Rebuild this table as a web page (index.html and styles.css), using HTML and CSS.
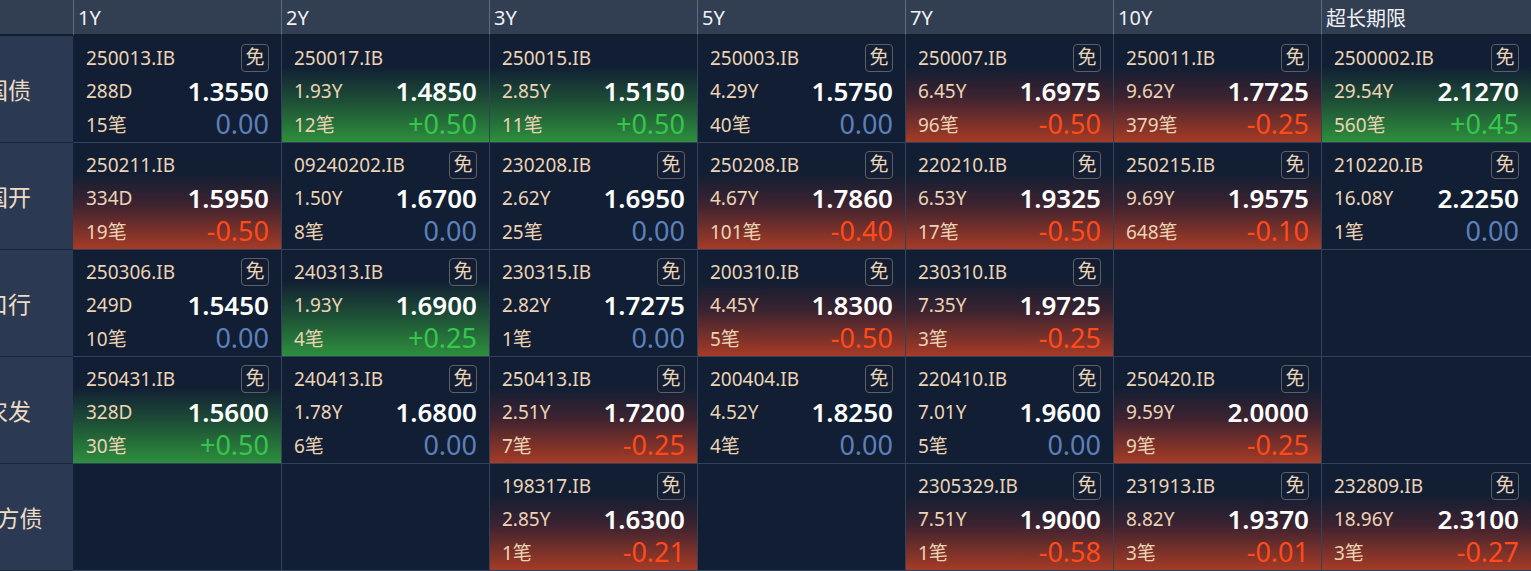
FILE: index.html
```html
<!DOCTYPE html>
<html lang="zh">
<head>
<meta charset="utf-8">
<title>债券行情</title>
<link rel="stylesheet" href="styles.css">
</head>
<body>
<div class="board">
  <div class="hd corner"></div>
  <div class="hd">1Y</div>
  <div class="hd">2Y</div>
  <div class="hd">3Y</div>
  <div class="hd">5Y</div>
  <div class="hd">7Y</div>
  <div class="hd">10Y</div>
  <div class="hd">超长期限</div>

  <!-- 国债 -->
  <div class="label"><span>国债</span></div>
  <div class="cell first">
    <div class="ln"><span class="code">250013.IB</span><span class="badge">免</span></div>
    <div class="ln"><span class="sub">288D</span><span class="price">1.3550</span></div>
    <div class="ln"><span class="sub">15笔</span><span class="chg flat">0.00</span></div>
  </div>
  <div class="cell green">
    <div class="ln"><span class="code">250017.IB</span></div>
    <div class="ln"><span class="sub">1.93Y</span><span class="price">1.4850</span></div>
    <div class="ln"><span class="sub">12笔</span><span class="chg up">+0.50</span></div>
  </div>
  <div class="cell green">
    <div class="ln"><span class="code">250015.IB</span></div>
    <div class="ln"><span class="sub">2.85Y</span><span class="price">1.5150</span></div>
    <div class="ln"><span class="sub">11笔</span><span class="chg up">+0.50</span></div>
  </div>
  <div class="cell">
    <div class="ln"><span class="code">250003.IB</span><span class="badge">免</span></div>
    <div class="ln"><span class="sub">4.29Y</span><span class="price">1.5750</span></div>
    <div class="ln"><span class="sub">40笔</span><span class="chg flat">0.00</span></div>
  </div>
  <div class="cell red">
    <div class="ln"><span class="code">250007.IB</span><span class="badge">免</span></div>
    <div class="ln"><span class="sub">6.45Y</span><span class="price">1.6975</span></div>
    <div class="ln"><span class="sub">96笔</span><span class="chg down">-0.50</span></div>
  </div>
  <div class="cell red">
    <div class="ln"><span class="code">250011.IB</span><span class="badge">免</span></div>
    <div class="ln"><span class="sub">9.62Y</span><span class="price">1.7725</span></div>
    <div class="ln"><span class="sub">379笔</span><span class="chg down">-0.25</span></div>
  </div>
  <div class="cell green">
    <div class="ln"><span class="code">2500002.IB</span><span class="badge">免</span></div>
    <div class="ln"><span class="sub">29.54Y</span><span class="price">2.1270</span></div>
    <div class="ln"><span class="sub">560笔</span><span class="chg up">+0.45</span></div>
  </div>

  <!-- 国开 -->
  <div class="label"><span>国开</span></div>
  <div class="cell first red">
    <div class="ln"><span class="code">250211.IB</span></div>
    <div class="ln"><span class="sub">334D</span><span class="price">1.5950</span></div>
    <div class="ln"><span class="sub">19笔</span><span class="chg down">-0.50</span></div>
  </div>
  <div class="cell">
    <div class="ln"><span class="code">09240202.IB</span><span class="badge">免</span></div>
    <div class="ln"><span class="sub">1.50Y</span><span class="price">1.6700</span></div>
    <div class="ln"><span class="sub">8笔</span><span class="chg flat">0.00</span></div>
  </div>
  <div class="cell">
    <div class="ln"><span class="code">230208.IB</span><span class="badge">免</span></div>
    <div class="ln"><span class="sub">2.62Y</span><span class="price">1.6950</span></div>
    <div class="ln"><span class="sub">25笔</span><span class="chg flat">0.00</span></div>
  </div>
  <div class="cell red">
    <div class="ln"><span class="code">250208.IB</span><span class="badge">免</span></div>
    <div class="ln"><span class="sub">4.67Y</span><span class="price">1.7860</span></div>
    <div class="ln"><span class="sub">101笔</span><span class="chg down">-0.40</span></div>
  </div>
  <div class="cell red">
    <div class="ln"><span class="code">220210.IB</span><span class="badge">免</span></div>
    <div class="ln"><span class="sub">6.53Y</span><span class="price">1.9325</span></div>
    <div class="ln"><span class="sub">17笔</span><span class="chg down">-0.50</span></div>
  </div>
  <div class="cell red">
    <div class="ln"><span class="code">250215.IB</span><span class="badge">免</span></div>
    <div class="ln"><span class="sub">9.69Y</span><span class="price">1.9575</span></div>
    <div class="ln"><span class="sub">648笔</span><span class="chg down">-0.10</span></div>
  </div>
  <div class="cell">
    <div class="ln"><span class="code">210220.IB</span><span class="badge">免</span></div>
    <div class="ln"><span class="sub">16.08Y</span><span class="price">2.2250</span></div>
    <div class="ln"><span class="sub">1笔</span><span class="chg flat">0.00</span></div>
  </div>

  <!-- 口行 -->
  <div class="label"><span>口行</span></div>
  <div class="cell first">
    <div class="ln"><span class="code">250306.IB</span><span class="badge">免</span></div>
    <div class="ln"><span class="sub">249D</span><span class="price">1.5450</span></div>
    <div class="ln"><span class="sub">10笔</span><span class="chg flat">0.00</span></div>
  </div>
  <div class="cell green">
    <div class="ln"><span class="code">240313.IB</span><span class="badge">免</span></div>
    <div class="ln"><span class="sub">1.93Y</span><span class="price">1.6900</span></div>
    <div class="ln"><span class="sub">4笔</span><span class="chg up">+0.25</span></div>
  </div>
  <div class="cell">
    <div class="ln"><span class="code">230315.IB</span><span class="badge">免</span></div>
    <div class="ln"><span class="sub">2.82Y</span><span class="price">1.7275</span></div>
    <div class="ln"><span class="sub">1笔</span><span class="chg flat">0.00</span></div>
  </div>
  <div class="cell red">
    <div class="ln"><span class="code">200310.IB</span><span class="badge">免</span></div>
    <div class="ln"><span class="sub">4.45Y</span><span class="price">1.8300</span></div>
    <div class="ln"><span class="sub">5笔</span><span class="chg down">-0.50</span></div>
  </div>
  <div class="cell red">
    <div class="ln"><span class="code">230310.IB</span><span class="badge">免</span></div>
    <div class="ln"><span class="sub">7.35Y</span><span class="price">1.9725</span></div>
    <div class="ln"><span class="sub">3笔</span><span class="chg down">-0.25</span></div>
  </div>
  <div class="cell"></div>
  <div class="cell"></div>

  <!-- 农发 -->
  <div class="label"><span>农发</span></div>
  <div class="cell first green">
    <div class="ln"><span class="code">250431.IB</span><span class="badge">免</span></div>
    <div class="ln"><span class="sub">328D</span><span class="price">1.5600</span></div>
    <div class="ln"><span class="sub">30笔</span><span class="chg up">+0.50</span></div>
  </div>
  <div class="cell">
    <div class="ln"><span class="code">240413.IB</span><span class="badge">免</span></div>
    <div class="ln"><span class="sub">1.78Y</span><span class="price">1.6800</span></div>
    <div class="ln"><span class="sub">6笔</span><span class="chg flat">0.00</span></div>
  </div>
  <div class="cell red">
    <div class="ln"><span class="code">250413.IB</span><span class="badge">免</span></div>
    <div class="ln"><span class="sub">2.51Y</span><span class="price">1.7200</span></div>
    <div class="ln"><span class="sub">7笔</span><span class="chg down">-0.25</span></div>
  </div>
  <div class="cell">
    <div class="ln"><span class="code">200404.IB</span><span class="badge">免</span></div>
    <div class="ln"><span class="sub">4.52Y</span><span class="price">1.8250</span></div>
    <div class="ln"><span class="sub">4笔</span><span class="chg flat">0.00</span></div>
  </div>
  <div class="cell">
    <div class="ln"><span class="code">220410.IB</span><span class="badge">免</span></div>
    <div class="ln"><span class="sub">7.01Y</span><span class="price">1.9600</span></div>
    <div class="ln"><span class="sub">5笔</span><span class="chg flat">0.00</span></div>
  </div>
  <div class="cell red">
    <div class="ln"><span class="code">250420.IB</span><span class="badge">免</span></div>
    <div class="ln"><span class="sub">9.59Y</span><span class="price">2.0000</span></div>
    <div class="ln"><span class="sub">9笔</span><span class="chg down">-0.25</span></div>
  </div>
  <div class="cell"></div>

  <!-- 地方债 -->
  <div class="label"><span>地方债</span></div>
  <div class="cell first"></div>
  <div class="cell"></div>
  <div class="cell red">
    <div class="ln"><span class="code">198317.IB</span><span class="badge">免</span></div>
    <div class="ln"><span class="sub">2.85Y</span><span class="price">1.6300</span></div>
    <div class="ln"><span class="sub">1笔</span><span class="chg down">-0.21</span></div>
  </div>
  <div class="cell"></div>
  <div class="cell red">
    <div class="ln"><span class="code">2305329.IB</span><span class="badge">免</span></div>
    <div class="ln"><span class="sub">7.51Y</span><span class="price">1.9000</span></div>
    <div class="ln"><span class="sub">1笔</span><span class="chg down">-0.58</span></div>
  </div>
  <div class="cell red">
    <div class="ln"><span class="code">231913.IB</span><span class="badge">免</span></div>
    <div class="ln"><span class="sub">8.82Y</span><span class="price">1.9370</span></div>
    <div class="ln"><span class="sub">3笔</span><span class="chg down">-0.01</span></div>
  </div>
  <div class="cell red">
    <div class="ln"><span class="code">232809.IB</span><span class="badge">免</span></div>
    <div class="ln"><span class="sub">18.96Y</span><span class="price">2.3100</span></div>
    <div class="ln"><span class="sub">3笔</span><span class="chg down">-0.27</span></div>
  </div>
</div>
</body>
</html>
```
FILE: styles.css
```css
* { box-sizing: border-box; }
html, body {
  margin: 0;
  padding: 0;
  background: #111e33;
}
body {
  font-family: "Noto Sans", "Noto Sans CJK SC", sans-serif;
  overflow: hidden;
}
.board {
  display: grid;
  grid-template-columns: 73px repeat(6, 208px) 1fr;
  grid-template-rows: 36px repeat(5, 107px);
  width: 1531px;
  height: 571px;
  overflow: hidden;
}
.hd {
  background: #323e52;
  border-bottom: 2px solid #131d30;
  border-left: 1px solid #5d6c85;
  color: #eef2f7;
  font-size: 20px;
  display: flex;
  align-items: center;
  padding-left: 4px;
  padding-top: 1px;
}
.hd.corner { border-left: none; }
.label {
  background: #2b3a52;
  border-bottom: 1px solid #1b2639;
  overflow: hidden;
  display: flex;
  align-items: center;
}
.label span {
  flex: none;
  width: 130px;
  margin-left: -57px;
  text-align: center;
  color: #eedcc5;
  font-size: 23px;
}
.cell {
  border-left: 1px solid #33425b;
  border-bottom: 1px solid #33425b;
  padding: 5px 12px 0 12px;
  display: flex;
  flex-direction: column;
}
.cell.first { border-left: none; padding-left: 13px; }
.cell.green {
  background: linear-gradient(to bottom, #111e33 28%, #1d4c36 60%, #2d8f3d 100%);
}
.cell.red {
  background: linear-gradient(to bottom, #111e33 28%, #3d2330 58%, #a63b26 100%);
}
.ln {
  height: 33px;
  display: flex;
  justify-content: space-between;
  align-items: center;
}
.code, .sub {
  font-size: 19px;
  color: #ecd3b4;
}
.badge {
  width: 28px;
  height: 28px;
  border: 1px solid #5c5f66;
  border-radius: 4px;
  font-size: 19px;
  color: #ecd3b4;
  display: flex;
  align-items: center;
  justify-content: center;
  line-height: 1;
}
.price {
  font-size: 26px;
  font-weight: 600;
  color: #ffffff;
}
.chg {
  font-size: 27px;
  font-weight: 400;
}
.chg.up { color: #36c64d; }
.chg.down { color: #ff4a1a; }
.chg.flat { color: #5b80bb; }
```
